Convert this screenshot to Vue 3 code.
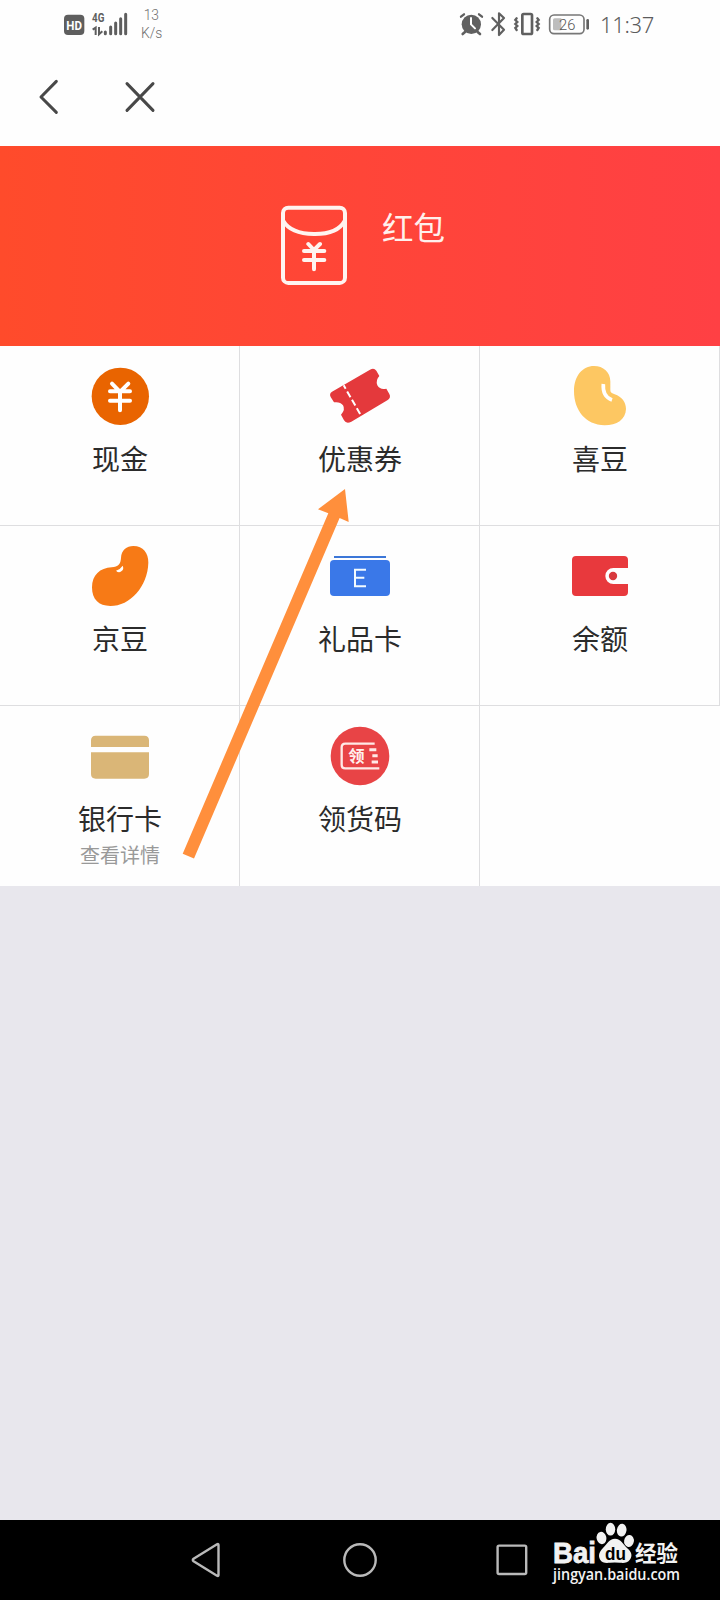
<script setup>
const items = [
  { id: 'cash', label: '现金', box: '60 48 240 240' },
  { id: 'coupon', label: '优惠券', box: '60 48 240 240' },
  { id: 'xibean', label: '喜豆', box: '60 48 240 240' },
  { id: 'jdbean', label: '京豆', box: '60 18 240 240' },
  { id: 'gift', label: '礼品卡', box: '60 18 240 240' },
  { id: 'balance', label: '余额', box: '780 18 240 240' },
  { id: 'bank', label: '银行卡', box: '60 18 240 240', note: '查看详情' },
  { id: 'code', label: '领货码', box: '60 18 240 240' },
]
</script>

<template>
  <div class="screen">
    <header class="top">
      <div class="status">
        <svg class="status-left" viewBox="0 0 390 150">
          <rect x="42" y="44" width="61" height="61" rx="12" fill="#5e5e5e" />
          <text class="cond" x="49" y="89" font-size="39" font-weight="700" fill="#fff" textLength="47" lengthAdjust="spacingAndGlyphs">HD</text>
          <text class="cond" x="126" y="67" font-size="38" font-weight="700" fill="#5e5e5e" textLength="37" lengthAdjust="spacingAndGlyphs">4G</text>
          <path d="M128 89l9-6v22M147 81v22l10-9" fill="none" stroke="#5e5e5e" stroke-width="6" />
          <path d="M166 96v5M182 81v20M197 69v32M212 56v45M227 43v58" stroke="#5e5e5e" stroke-width="9" stroke-linecap="round" />
          <text class="rob" x="281" y="59" font-size="42" fill="#707070" textLength="46" lengthAdjust="spacingAndGlyphs">13</text>
          <text class="rob" x="273" y="113" font-size="42" fill="#707070" textLength="64" lengthAdjust="spacingAndGlyphs">K/s</text>
        </svg>
        <svg class="status-right" viewBox="0 0 660 150">
          <g stroke="#606060" fill="none" stroke-linecap="round">
            <circle cx="64" cy="73" r="29" fill="#606060" stroke="none" />
            <path d="M45 96l-7 6M83 96l7 6" stroke-width="8" />
            <path d="M33 50l9-7M87 43l9 7" stroke-width="7" />
            <path d="M63 54v19l12 12" stroke="#fff" stroke-width="6" />
            <path d="M127 54l35 35-15 16V40l15 14-35 36" stroke-width="6.500" stroke-linejoin="round" />
            <rect x="217" y="42" width="29" height="60" rx="4" stroke-width="8" />
            <path d="M200 55l-4 5 6 6-6 6 6 6-6 6 4 6M262 55l4 5-6 6 6 6-6 6 6 6-4 6" stroke-width="7" />
            <rect x="299" y="45" width="103" height="56" rx="13" stroke="#777" stroke-width="5" />
            <path d="M413 61v24" stroke-width="8" />
          </g>
          <path d="M309 60q0-5 5-5h20v36h-20q-5 0-5-5z" fill="#bdbdbd" />
          <text class="rob" x="327" y="89" font-size="46" fill="#555" textLength="49" lengthAdjust="spacingAndGlyphs">26</text>
          <text class="time" x="450" y="98" font-size="66" fill="#5c5c5c" textLength="163" lengthAdjust="spacing">11:37</text>
        </svg>
      </div>
      <nav class="tools">
        <svg viewBox="0 0 480 150">
          <path d="M109 64L63 111l46 46M321 71l78 80M399 71l-78 80" fill="none" stroke="#484848" stroke-width="9" stroke-linecap="round" stroke-linejoin="round" />
        </svg>
      </nav>
    </header>

    <section class="banner">
      <svg viewBox="60 45 204 243">
        <g fill="none" stroke="#fff4f0" stroke-width="12" stroke-linecap="round">
          <rect x="69" y="53" width="186" height="226" rx="16" />
          <path d="M70 93Q92 131 162 132T254 93" />
          <path d="M145 162l17 18 18-18M162 181v57M132 183h61M132 210h61" />
        </g>
      </svg>
      <h1>红包</h1>
    </section>

    <main class="grid">
      <div v-for="item in items" :key="item.id" class="cell">
        <svg class="icon" :viewBox="item.box">
          <template v-if="item.id === 'cash'">
            <circle cx="181" cy="169" r="86" fill="#e96400" />
            <path d="M156 131l24 25 25-25M180 156v55M150 154h60M150 182h60" fill="none" stroke="#fff" stroke-width="12" stroke-linecap="round" />
          </template>
          <template v-else-if="item.id === 'coupon'">
            <path d="M96 155L210 89Q222 82 229 92L238 108Q226 121 232 136Q241 151 259 146L268 162Q274 173 262 181L154 245Q139 253 132 241L123 224Q137 209 129 196Q120 184 102 187L92 171Q87 161 96 155z" fill="#e4393c" />
            <path d="M131 136l53 92" stroke="#fff" stroke-width="6" stroke-dasharray="20 9" stroke-dashoffset="8" />
          </template>
          <template v-else-if="item.id === 'xibean'">
            <path d="M162 78C190 78 211 96 211 124V151C211 158 216 160 224 163C246 171 258 187 258 207C257 239 230 256 194 256C136 255 102 210 102 154C102 107 128 78 162 78z" fill="#fdc762" />
            <path d="M190 132Q187 170 216 180" fill="none" stroke="#fff" stroke-width="11" />
          </template>
          <template v-else-if="item.id === 'jdbean'">
            <path d="M220 48C250 48 265 70 265 98C263 169 211 228 151 228C116 228 96 208 96 172C96 135 120 114 155 112C175 111 182 102 183 84C184 60 200 48 220 48z" fill="#f77a16" />
            <path d="M168 122Q180 119 188 107Q193 118 184 124Q176 130 168 122z" fill="#fff" />
          </template>
          <template v-else-if="item.id === 'gift'">
            <path d="M102 81h156" stroke="#3c77d8" stroke-width="6" />
            <rect x="90" y="90" width="180" height="108" rx="12" fill="#3a78e8" />
            <path d="M198 119h-33v50h33M165 143h28" fill="none" stroke="#f3fbff" stroke-width="6" />
          </template>
          <template v-else-if="item.id === 'balance'">
            <path d="M828 78h144q12 0 12 12v24h-44a24 24 0 0 0 0 48h44v24q0 12-12 12H828q-12 0-12-12V90q0-12 12-12z" fill="#e8393d" />
            <circle cx="939" cy="138" r="12.5" fill="#d8393e" />
          </template>
          <template v-else-if="item.id === 'bank'">
            <path d="M93 111V91q0-14 14-14h146q14 0 14 14v20zM93 127h174v65q0 14-14 14H107q-14 0-14-14z" fill="#dab677" />
          </template>
          <template v-else>
            <circle cx="180" cy="138" r="88" fill="#e84446" />
            <path d="M224 101h-88q-11 0-11 11v52q0 11 11 11h102" fill="none" stroke="#ffe9e6" stroke-width="7" />
            <path d="M208 119h21M217 137h16M215 156h19" stroke="#ffe9e6" stroke-width="9" />
            <text x="145" y="156" font-size="49" font-weight="700" fill="#fff0ed">领</text>
          </template>
        </svg>
        <span class="label">{{ item.label }}</span>
        <span v-if="item.note" class="note">{{ item.note }}</span>
      </div>
      <svg class="arrow" viewBox="170 480 190 390">
        <path d="M345 489L348.7 522L339.6 518L194 858.5L182.7 853.7L328.3 513.2L318 509.3z" fill="#ff8f3c" />
      </svg>
    </main>

    <footer class="system">
      <svg viewBox="0 0 40 40"><path d="M31.500 5v30q0 1.500-1.500.7L6.600 21.300Q5 20 6.600 18.700L30 4.300q1.500-.8 1.500.7z" /></svg>
      <svg viewBox="0 0 40 40"><circle cx="20" cy="20" r="15.7" /></svg>
      <svg viewBox="0 0 40 40"><rect x="4.600" y="5.600" width="28.600" height="28.400" rx="1.500" /></svg>
      <svg class="mark" viewBox="540 1520 160 80">
        <g fill="#f2f2f2">
          <text class="bai" x="553" y="1562.500" font-size="30" textLength="43" lengthAdjust="spacingAndGlyphs">Bai</text>
          <ellipse cx="601.500" cy="1538" rx="4.900" ry="6.200" transform="rotate(-12 601.5 1538)" />
          <ellipse cx="610.500" cy="1529.200" rx="4.700" ry="6.400" />
          <ellipse cx="621.700" cy="1530.200" rx="4.800" ry="6.400" transform="rotate(8 621.7 1530.2)" />
          <ellipse cx="629" cy="1541" rx="4.900" ry="6" transform="rotate(10 629 1541)" />
          <path d="M615 1538.700c6 0 8 5.500 12 9.300c5 4 5.500 8 3 11.500c-2.500 3.800-6.500 3.600-10 3.300q-5.500-.8-10 0c-4 .3-8 .5-10-3.300c-2-3.800-1-7.500 3-11.500c4-3.800 6-9.300 12-9.300z" />
          <text class="cjk" x="635" y="1560.500" font-size="21.500" textLength="43" lengthAdjust="spacingAndGlyphs">经验</text>
          <text class="url" x="553" y="1579.500" font-size="15.500" textLength="127" lengthAdjust="spacingAndGlyphs">jingyan.baidu.com</text>
        </g>
        <text class="du" x="605" y="1559.500" font-size="18" textLength="21" lengthAdjust="spacingAndGlyphs">du</text>
      </svg>
    </footer>
  </div>
</template>

<style>
body { background: #e8e7ed; }
</style>

<style scoped>
.screen {
  width: 720px;
  height: 1600px;
  display: flex;
  flex-direction: column;
  overflow: hidden;
  background: #e8e7ed;
  font-family: "Noto Sans", "Noto Sans CJK SC", sans-serif;
}
svg { display: block; }
.top { height: 146px; background: #fefefe; }
.status { display: flex; justify-content: space-between; padding: 0 50px; height: 60px; }
.status-left { width: 130px; height: 50px; }
.status-right { width: 220px; height: 50px; }
.rob { font-family: Roboto, sans-serif; font-weight: 300; }
.cond { font-family: Roboto, sans-serif; }
.time { font-family: "Noto Sans", sans-serif; font-weight: 300; }
.tools { padding-left: 20px; }
.tools svg { width: 160px; height: 50px; overflow: visible; }
.banner {
  height: 200px;
  box-sizing: border-box;
  display: flex;
  gap: 34px;
  padding: 59px 0 0 280px;
  background: linear-gradient(90deg, #ff4b2b, #ff4538 50%, #ff4044);
}
.banner svg { width: 68px; height: 81px; }
.banner h1 {
  margin: 1px 0 0;
  font-size: 31.5px;
  line-height: 40px;
  font-weight: 400;
  color: #fff0ec;
  font-family: "Noto Sans CJK SC", sans-serif;
}
.grid {
  position: relative;
  height: 540px;
  display: grid;
  grid-template-columns: repeat(3, 240px);
  grid-auto-rows: 180px;
  background: #fefefe;
}
.cell {
  box-sizing: border-box;
  border-right: 1px solid #dedee0;
  border-bottom: 1px solid #dedee0;
  display: flex;
  flex-direction: column;
  align-items: center;
  padding: 10px 0 0 1px;
  font-family: "Noto Sans CJK SC", sans-serif;
}
.cell:nth-child(n + 7) { border-bottom: 0; }
.icon { width: 80px; height: 80px; flex: none; }
.label { margin-top: 2px; font-size: 28px; line-height: 40px; color: #2b2b2b; }
.note { margin-top: 3px; font-size: 20px; line-height: 28px; color: #999; }
.arrow { position: absolute; left: 170px; top: 134px; width: 190px; height: 390px; }
.system {
  position: relative;
  margin-top: auto;
  height: 80px;
  box-sizing: border-box;
  display: grid;
  grid-template-columns: repeat(3, 153px);
  place-content: center;
  justify-items: center;
  background: #000;
}
.system > svg:not(.mark) { width: 40px; height: 40px; fill: none; stroke: #b9b9b9; stroke-width: 2.4; }
.system .mark { position: absolute; left: 540px; top: 0; width: 160px; height: 80px; }
.bai { font-family: "Liberation Sans", sans-serif; font-weight: 700; stroke: #f2f2f2; stroke-width: 0.8px; }
.cjk { font-family: "Noto Sans CJK SC", sans-serif; font-weight: 700; }
.url { font-family: "Open Sans", sans-serif; font-weight: 600; }
.du { font-family: "Liberation Sans", sans-serif; font-weight: 700; fill: #000; }
</style>
